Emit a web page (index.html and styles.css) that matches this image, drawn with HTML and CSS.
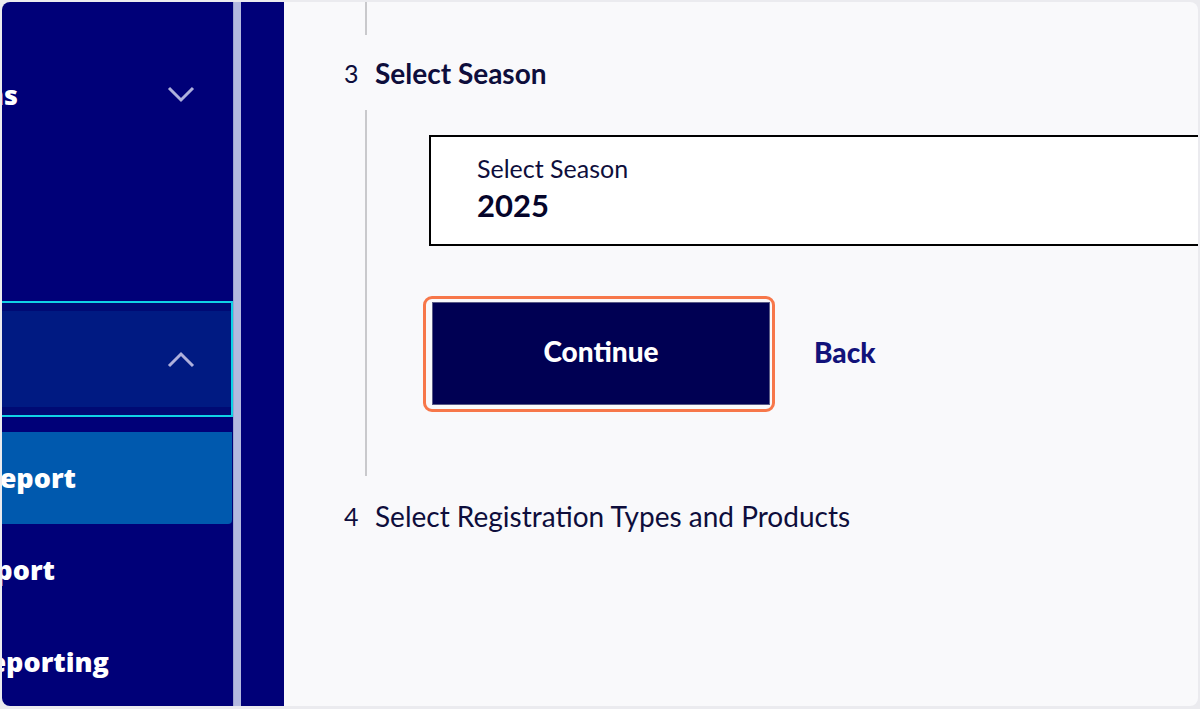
FILE: index.html
```html
<!DOCTYPE html>
<html>
<head>
<meta charset="utf-8">
<link rel="stylesheet" href="styles.css">
</head>
<body>
<div class="window">
  <aside class="sidebar">
    <nav class="nav">
      <div class="nav-top"></div>
      <div class="nav-row">
        <span class="label label-1"><span>Programs</span></span>
        <svg class="chev" width="28" height="17" viewBox="0 0 28 17"><polyline points="2,2 14,14 26,2" fill="none" stroke="#aeb0dc" stroke-width="3"/></svg>
      </div>
      <div class="nav-spacer"></div>
      <div class="nav-focus">
        <div class="nav-focus-inner">
          <span class="label label-hidden"><span>Reports</span></span>
          <svg class="chev" width="28" height="17" viewBox="0 0 28 17"><polyline points="2,15 14,3 26,15" fill="none" stroke="#aeb0dc" stroke-width="3"/></svg>
        </div>
      </div>
      <div class="nav-row nav-active">
        <span class="label label-2"><span>Registration Report</span></span>
      </div>
      <div class="nav-row">
        <span class="label label-3"><span>Roster Report</span></span>
      </div>
      <div class="nav-row">
        <span class="label label-4"><span>Financial Reporting</span></span>
      </div>
    </nav>
    <div class="scroll-track"></div>
    <div class="rail"></div>
  </aside>
  <main class="main">
    <div class="stub"></div>
    <div class="step-head">
      <span class="step-num">3</span>
      <span class="step-title strong">Select Season</span>
    </div>
    <div class="step-body">
      <div class="select-box">
        <div class="select-label">Select Season</div>
        <div class="select-value">2025</div>
      </div>
      <div class="actions">
        <div class="focus-ring">
          <button class="btn-primary">Continue</button>
        </div>
        <a class="btn-link">Back</a>
      </div>
    </div>
    <div class="step-head step-4">
      <span class="step-num">4</span>
      <span class="step-title">Select Registration Types and Products</span>
    </div>
  </main>
</div>
</body>
</html>
```
FILE: styles.css
```css
* { box-sizing: border-box; }
html, body { margin: 0; padding: 0; }
body {
  width: 1200px;
  height: 709px;
  overflow: hidden;
  background: #ebebef;
  font-family: Lato, "Open Sans", sans-serif;
}
.window {
  margin: 2px 2px 0 2px;
  height: 704px;
  border-radius: 8px;
  overflow: hidden;
  display: flex;
  background: #f9f9fb;
}
.sidebar {
  width: 282px;
  flex: none;
  display: flex;
  background: #000078;
}
.nav {
  width: 231px;
  flex: none;
  display: flex;
  flex-direction: column;
}
.nav-top { height: 47px; flex: none; }
.nav-spacer { height: 160px; flex: none; }
.nav-row {
  height: 92px;
  flex: none;
  display: flex;
  align-items: center;
  justify-content: space-between;
  padding-right: 38px;
  padding-bottom: 2px;
}
.label {
  display: flex;
  justify-content: flex-end;
  overflow: hidden;
  white-space: nowrap;
  font-family: "Open Sans", sans-serif;
  font-weight: 800;
  font-size: 27px;
  color: #ffffff;
  width: 60px;
}
.label-1 { width: 16px; }
.label-2 { width: 74px; }
.label-3 { width: 53px; }
.label-4 { width: 107px; }
.label-hidden { visibility: hidden; }
.nav-active {
  background: #0059ae;
  border-radius: 0 0 4px 0;
  width: 230px;
  margin-top: 15px;
}
.nav-focus {
  height: 116px;
  flex: none;
  margin-left: -10px;
  width: 241px;
  border: 2px solid #10d2e6;
  padding: 8px 0;
  background: #000a74;
}
.nav-focus-inner {
  height: 100%;
  background: #001a82;
  display: flex;
  align-items: center;
  justify-content: space-between;
  padding-right: 36px;
}
.chev { display: block; }
.scroll-track {
  width: 8px;
  flex: none;
  background: #b3b9df;
  border-left: 1px solid #9da3cf;
}
.rail { flex: 1; background: #000078; }

.main {
  flex: 1;
  min-width: 0;
  overflow: hidden;
  padding-left: 58px;
  color: #0e0e3c;
}
.stub {
  margin-left: 23px;
  width: 2px;
  height: 33px;
  background: #c9c9cc;
}
.step-head {
  height: 75px;
  display: flex;
  align-items: center;
  font-size: 28px;
}
.step-num {
  width: 33px;
  padding-left: 2px;
  flex: none;
  font-size: 25px;
  color: #0e0e3c;
}
.step-title { white-space: nowrap; }
.strong { font-weight: 700; }
.step-body {
  margin-left: 23px;
  border-left: 2px solid #c9c9cc;
  padding: 25px 0 64px 62px;
}
.select-box {
  width: 900px;
  height: 111px;
  border: 2px solid #000000;
  background: #ffffff;
  padding: 16px 0 0 46px;
}
.select-label {
  font-size: 25px;
  color: #0e0e3c;
  line-height: 30px;
}
.select-value {
  margin-top: 4px;
  font-size: 31px;
  font-weight: 700;
  color: #05052a;
  line-height: 36px;
}
.actions {
  margin-top: 50px;
  margin-left: -6px;
  display: flex;
  align-items: center;
}
.focus-ring {
  border: 3px solid #f7774a;
  border-radius: 9px;
  padding: 3px 2px 4px 6px;
}
.btn-primary {
  display: block;
  width: 338px;
  height: 103px;
  padding: 0 0 5px 0;
  background: #000053;
  border: 1px solid #5a5a86;
  color: #ffffff;
  font-family: Lato, sans-serif;
  font-weight: 900;
  font-size: 28px;
}
.btn-link {
  margin-left: 39px;
  margin-bottom: 5px;
  font-weight: 900;
  font-size: 28px;
  color: #12127a;
}
.step-4 {
  height: 80px;
}
.step-4 .step-title { font-size: 28px; }
```
